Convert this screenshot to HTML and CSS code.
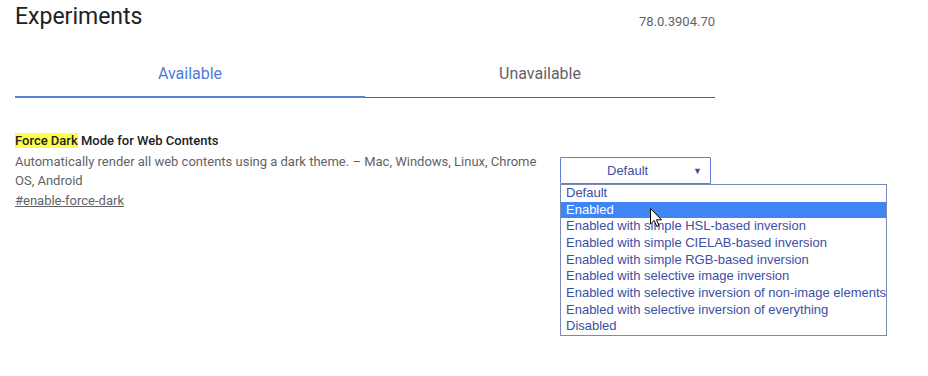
FILE: index.html
```html
<!DOCTYPE html>
<html>
<head>
<meta charset="utf-8">
<link rel="stylesheet" href="styles.css">
</head>
<body>
<div class="page">
  <header class="header">
    <h1 class="title">Experiments</h1>
    <span class="version">78.0.3904.70</span>
  </header>
  <nav class="tabs">
    <div class="tab tab-active">Available</div>
    <div class="tab">Unavailable</div>
  </nav>
  <section class="experiment">
    <div class="exp-text">
      <h2 class="exp-name"><mark class="hl">Force Dark</mark> Mode for Web Contents</h2>
      <p class="exp-desc">Automatically render all web contents using a dark theme. – Mac, Windows, Linux, Chrome OS, Android</p>
      <a class="exp-link" href="#enable-force-dark">#enable-force-dark</a>
    </div>
    <div class="exp-actions">
      <div class="select">
        <span class="select-value">Default</span>
        <span class="select-arrow">▼</span>
      </div>
      <ul class="options">
        <li class="option">Default</li>
        <li class="option option-sel">Enabled</li>
        <li class="option">Enabled with simple HSL-based inversion</li>
        <li class="option">Enabled with simple CIELAB-based inversion</li>
        <li class="option">Enabled with simple RGB-based inversion</li>
        <li class="option">Enabled with selective image inversion</li>
        <li class="option">Enabled with selective inversion of non-image elements</li>
        <li class="option">Enabled with selective inversion of everything</li>
        <li class="option">Disabled</li>
      </ul>
      <svg class="cursor" width="13" height="20" viewBox="0 0 13 20"><path d="M0.5 0.5 L0.5 16 L4.2 12.5 L6.8 18.5 L9 17.5 L6.5 11.8 L11.5 11.8 Z" fill="#fff" stroke="#000" stroke-width="1" stroke-linejoin="miter"/></svg>
    </div>
  </section>
</div>
</body>
</html>
```

FILE: styles.css
```css
* { box-sizing: border-box; }
html, body { margin: 0; padding: 0; background: #fff; }
body { font-family: Roboto, "Noto Sans", sans-serif; color: #202124; }
.page { width: 715px; padding-left: 15px; }
.header { display: flex; justify-content: space-between; align-items: flex-start; height: 44px; }
.title { margin: 0; padding-top: 3px; font-size: 23px; font-weight: 400; line-height: 28px; color: #202124; }
.version { font-size: 13px; color: #5f6368; padding-top: 14px; line-height: 16px; }
.tabs { display: flex; height: 54px; }
.tab { flex: 1; text-align: center; font-size: 16px; color: #5f6368; padding-top: 20px; border-bottom: 1px solid #5f6368; }
.tab-active { color: #4d7dd8; border-bottom: 2px solid #5a83d6; }
.experiment { display: flex; margin-top: 34px; }
.exp-text { width: 545px; flex-shrink: 0; padding-right: 14px; }
.exp-name { margin: 0; font-size: 13px; font-weight: 500; line-height: 18px; color: #202124; }
.hl { background: #ffff4a; color: #202124; }
.exp-desc { margin: 2px 0 0; font-size: 13px; line-height: 19px; color: #5f6368; }
.exp-link { display: inline-block; font-size: 13px; line-height: 19px; color: #5f6368; text-decoration: underline; }
.exp-actions { position: relative; flex-shrink: 0; padding-top: 25px; font-family: "Liberation Sans", Arial, sans-serif; }
.select { width: 151px; height: 27px; border: 1px solid #5b7dd2; display: flex; align-items: center; font-size: 13px; color: #3c4fa6; border-radius: 1px; padding-left: 46px; padding-right: 8px; }
.select-arrow { margin-left: auto; font-size: 9px; color: #3c4fa6; }
.options { margin: 0; padding: 0; list-style: none; width: 327px; border: 1px solid #7b89b6; }
.option { height: 16.67px; line-height: 16px; font-size: 13px; padding-left: 5px; color: #3c4fa6; white-space: nowrap; }
.option-sel { background: #3f86f4; color: #fff; }
.cursor { position: absolute; left: 90px; top: 76px; }
```
